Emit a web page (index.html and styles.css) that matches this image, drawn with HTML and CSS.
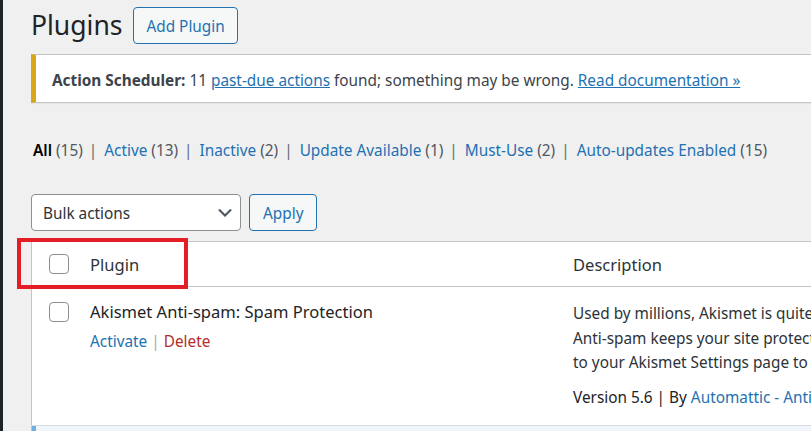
FILE: index.html
```html
<!DOCTYPE html>
<html lang="en">
<head>
    <meta charset="UTF-8">
    <meta name="viewport" content="width=device-width, initial-scale=1.0">
    <title>Plugins</title>
    <link rel="stylesheet" href="styles.css">
</head>
<body>
    <div class="page">
        <div class="menu-edge"></div>

        <div class="wrap">
            <div class="title-row">
                <h1>Plugins</h1>
                <a class="page-title-action" href="#">Add Plugin</a>
            </div>

            <div class="notice">
                <p><strong>Action Scheduler:</strong> 11 <a href="#">past-due actions</a> found; something may be wrong. <a href="#">Read documentation &raquo;</a></p>
            </div>

            <ul class="subsubsub">
                <li><a class="current" href="#">All <span class="count">(15)</span></a><span class="sep">|</span></li>
                <li><a href="#">Active <span class="count">(13)</span></a><span class="sep">|</span></li>
                <li><a href="#">Inactive <span class="count">(2)</span></a><span class="sep">|</span></li>
                <li><a href="#">Update Available <span class="count">(1)</span></a><span class="sep">|</span></li>
                <li><a href="#">Must-Use <span class="count">(2)</span></a><span class="sep">|</span></li>
                <li><a href="#">Auto-updates Enabled <span class="count">(15)</span></a></li>
            </ul>

            <div class="tablenav">
                <div class="select">
                    <span>Bulk actions</span>
                    <svg width="20" height="20" viewBox="0 0 20 20"><path d="M5 6l5 5 5-5 2 1-7 7-7-7 2-1z" fill="#50575e"/></svg>
                </div>
                <a class="button" href="#">Apply</a>
            </div>

            <div class="table-box">
                <table class="plugins">
                    <thead>
                        <tr>
                            <th class="check-column"><span class="checkbox"></span></th>
                            <th class="column-name">Plugin</th>
                            <th class="column-description">Description</th>
                        </tr>
                    </thead>
                    <tbody>
                        <tr class="inactive">
                            <th class="check-column"><span class="checkbox"></span></th>
                            <td class="column-name">
                                <strong class="plugin-title">Akismet Anti-spam: Spam Protection</strong>
                                <div class="row-actions"><a href="#">Activate</a><span class="sep">|</span><a class="delete" href="#">Delete</a></div>
                            </td>
                            <td class="column-description">
                                <p class="desc">Used by millions, Akismet is quite possibly the best way in the world to <strong>protect your blog from spam</strong>. Akismet<br>Anti-spam keeps your site protected even while you sleep. To get started: activate the Akismet plugin and then go<br>to your Akismet Settings page to set up your API key.</p>
                                <p class="version">Version 5.6 | By <a href="#">Automattic - Anti-spam Team</a> | <a href="#">View details</a></p>
                            </td>
                        </tr>
                        <tr class="active">
                            <th class="check-column"><span class="checkbox"></span></th>
                            <td class="column-name">
                                <strong class="plugin-title">Advanced Custom Fields</strong>
                            </td>
                            <td class="column-description">
                                <p class="desc">Customize WordPress with powerful, professional and intuitive fields.</p>
                            </td>
                        </tr>
                    </tbody>
                </table>
                <div class="highlight"></div>
            </div>
        </div>
    </div>
</body>
</html>
```

FILE: styles.css
```css
body {
    margin: 0;
    background-color: #f0f0f1;
    color: #3c434a;
    font-family: "Noto Sans", "Open Sans", sans-serif;
    font-size: 15.35px;
    overflow: hidden;
}

a {
    color: #2271b1;
}

.page {
    display: flex;
    min-height: 431px;
}

.menu-edge {
    width: 3px;
    flex-shrink: 0;
    background-color: #1d2327;
}

.wrap {
    flex: 1;
    margin-left: 28px;
    min-width: 0;
}

.title-row {
    display: flex;
    align-items: center;
    padding-top: 7px;
    height: 37px;
}

h1 {
    margin: 0 11px 0 0;
    font-size: 26.5px;
    font-weight: 400;
    line-height: 37px;
    color: #1d2327;
}

.page-title-action {
    display: inline-flex;
    align-items: center;
    height: 35px;
    padding: 0 12px;
    border: 1px solid #2271b1;
    border-radius: 4px;
    background-color: #f6f7f7;
    text-decoration: none;
    white-space: nowrap;
}

.notice {
    margin-top: 10px;
    background-color: #fff;
    border: 1px solid #c3c4c7;
    border-left: 5px solid #dba617;
    border-right: none;
    padding: 13px 16px 9px;
    box-shadow: 0 1px 1px rgba(0, 0, 0, 0.04);
    white-space: nowrap;
}

.notice p {
    margin: 0;
    line-height: 25px;
}

.notice strong {
    color: #3c434a;
}

.subsubsub {
    list-style: none;
    margin: 35px 0 0;
    padding: 0 0 0 2px;
    line-height: 25px;
    color: #646970;
    white-space: nowrap;
}

.subsubsub li {
    display: inline;
}

.subsubsub a {
    text-decoration: none;
}

.subsubsub a.current {
    color: #000;
    font-weight: 600;
}

.subsubsub .count {
    color: #50575e;
    font-weight: 400;
}

.subsubsub .sep {
    margin: 0 3px 0 6px;
}

.tablenav {
    display: flex;
    gap: 8px;
    margin-top: 31px;
    height: 37px;
}

.select {
    display: flex;
    align-items: center;
    justify-content: space-between;
    box-sizing: border-box;
    width: 210px;
    height: 37px;
    padding: 0 5px 0 11px;
    border: 1px solid #8c8f94;
    border-radius: 4px;
    background-color: #fff;
    color: #2c3338;
}

.button {
    display: inline-flex;
    align-items: center;
    box-sizing: border-box;
    height: 37px;
    padding: 0 13px;
    border: 1px solid #2271b1;
    border-radius: 4px;
    background-color: #f6f7f7;
    text-decoration: none;
}

.table-box {
    position: relative;
    margin-top: 10px;
}

.plugins {
    width: 1100px;
    table-layout: fixed;
    border-collapse: collapse;
    background-color: #fff;
    border: 1px solid #c3c4c7;
    border-right: none;
}

.plugins th,
.plugins td {
    text-align: left;
    vertical-align: top;
    padding: 0;
}

.plugins thead th {
    height: 44px;
    vertical-align: middle;
    font-size: 16.55px;
    font-weight: 400;
    color: #2c3338;
    border-bottom: 1px solid #c3c4c7;
}

.check-column {
    width: 29px;
    padding-left: 17px !important;
}

.column-name {
    width: 471px;
    padding-left: 12px !important;
}

.column-description {
    padding-left: 12px !important;
    white-space: nowrap;
}

.checkbox {
    display: block;
    box-sizing: border-box;
    width: 20px;
    height: 20px;
    border: 1px solid #8c8f94;
    border-radius: 4px;
    background-color: #fff;
}

.plugins tbody th.check-column {
    padding-top: 15px;
}

.plugins tbody td {
    padding-top: 12px;
    padding-bottom: 16px;
}

.plugin-title {
    display: block;
    font-size: 16.55px;
    font-weight: 400;
    line-height: 26px;
    color: #1d2327;
}

.row-actions {
    margin-top: 4px;
    line-height: 24px;
}

.row-actions a {
    text-decoration: none;
}

.row-actions .delete {
    color: #b32d2e;
}

.row-actions .sep {
    margin: 0 4px;
    color: #a7aaad;
}

.desc {
    margin: 2px 0 0;
    line-height: 24.5px;
    color: #2c3338;
}

.desc strong {
    font-weight: 400;
}

.version {
    margin: 10px 0 0;
    line-height: 24.5px;
    color: #1d2327;
}

.version a {
    text-decoration: none;
}

.plugins tr.active th,
.plugins tr.active td {
    background-color: #f0f6fc;
    border-top: 1px solid #dcdcde;
}

.plugins tr.active th.check-column {
    box-shadow: inset 4px 0 0 #72aee6;
}

.highlight {
    position: absolute;
    left: -14px;
    top: -3px;
    width: 171px;
    height: 51px;
    box-sizing: border-box;
    border: 4px solid #e41e26;
}
```
